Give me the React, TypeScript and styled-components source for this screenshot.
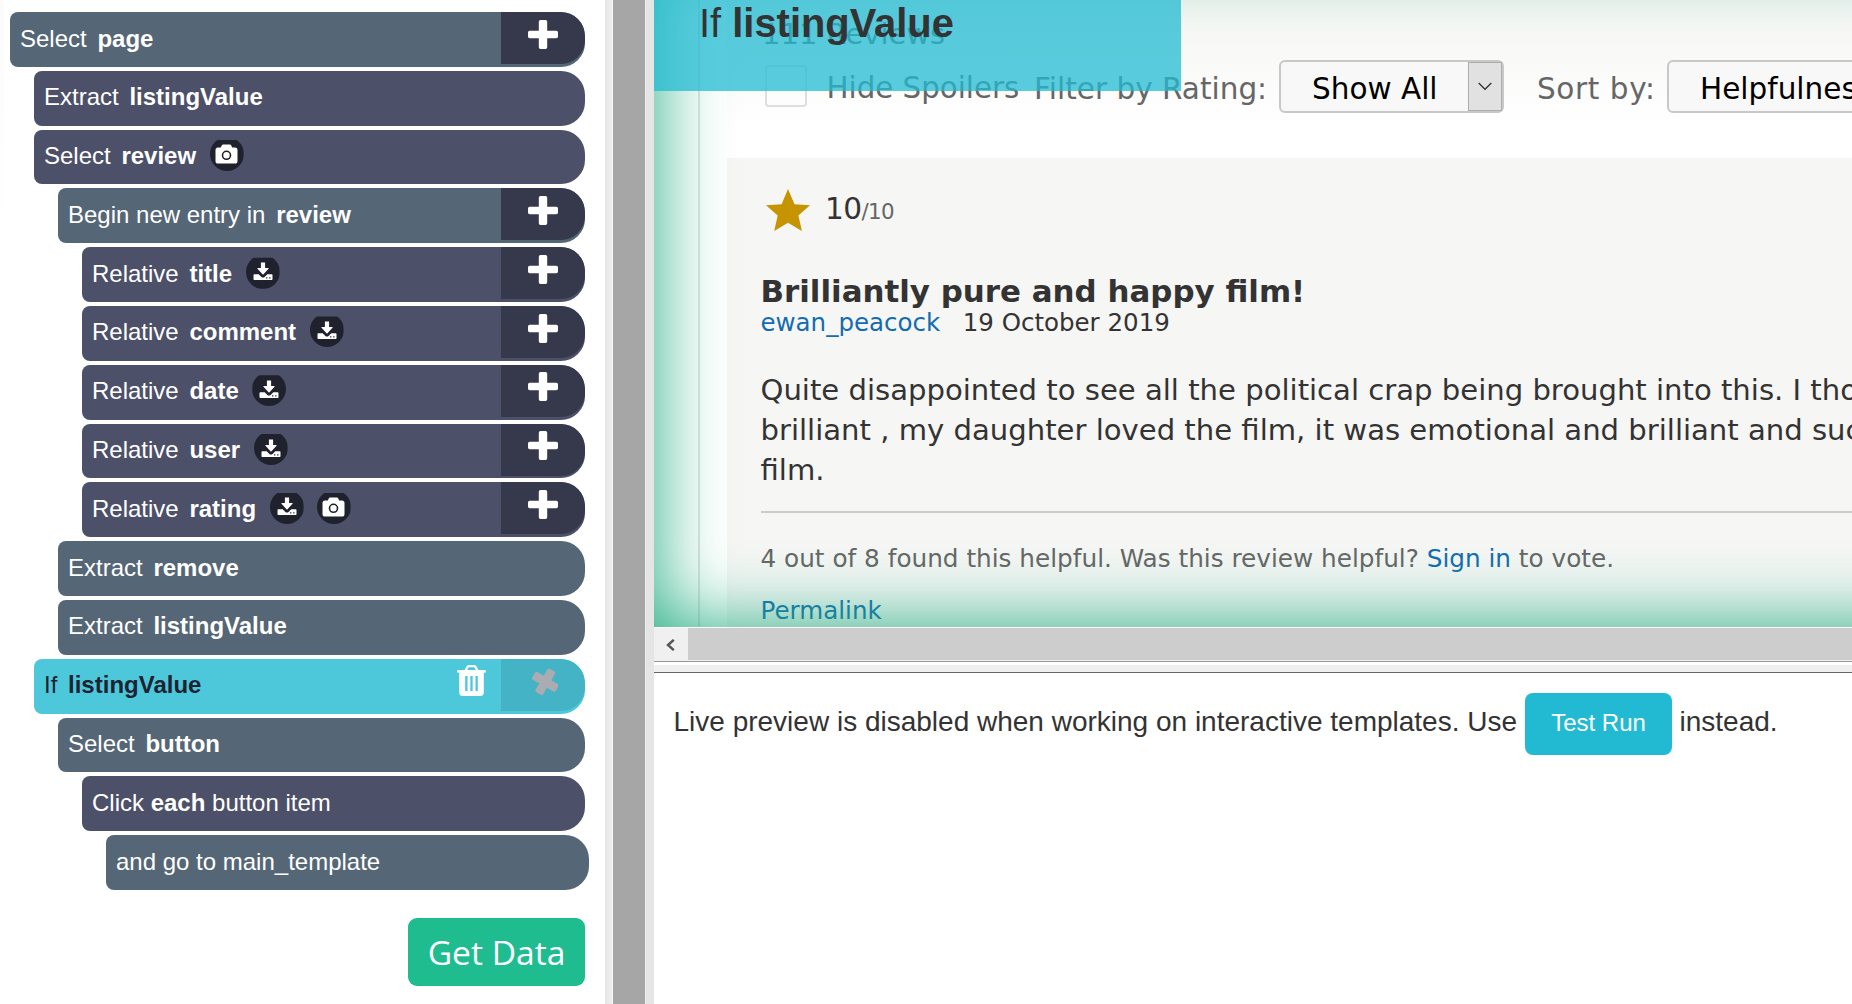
import React from 'react';
import styled, { createGlobalStyle } from 'styled-components';

const Global = createGlobalStyle`
  html, body { margin: 0; padding: 0; overflow: hidden; background: #fff; }
  * { box-sizing: border-box; }
`;

const sans = `"Liberation Sans", Arial, sans-serif`;
const verdana = `Verdana, "DejaVu Sans", sans-serif`;

const Screen = styled.div`
  display: flex;
  width: 1852px;
  height: 1004px;
  overflow: hidden;
  background: #fff;
  font-family: ${sans};
`;

/* Command sidebar */

const Sidebar = styled.aside`
  flex: none;
  display: flex;
  flex-direction: column;
  width: 605px;
  padding-top: 12px;
  background: linear-gradient(#fbfbfb, #fff) 0 0 / 4px 240px no-repeat #fff;
`;

const CommandList = styled.div`
  display: flex;
  flex-direction: column;
  gap: 4px;
`;

type Tone = 'slate' | 'purple' | 'active';
const tones: Record<Tone, string> = { slate: '#556676', purple: '#4c5069', active: '#4dc8db' };

const Command = styled.div<{ $depth: number; $tone: Tone; $wide?: boolean }>`
  display: flex;
  justify-content: space-between;
  height: 54.8px;
  margin-left: ${p => 10 + p.$depth * 24}px;
  margin-right: ${p => (p.$wide ? 16 : 20)}px;
  border-radius: 8px 24px 24px 8px;
  overflow: hidden;
  background: ${p => tones[p.$tone]};
  color: ${p => (p.$tone === 'active' ? '#1f2230' : '#fff')};
`;

const Label = styled.div`
  display: flex;
  align-items: center;
  padding: 0 0 2.8px 10px;
  font-size: 24px;
  line-height: 27px;
  white-space: pre;
`;

const Name = styled.b`
  margin-left: 10.7px;
`;

const Badges = styled.span`
  display: flex;
  gap: 13px;
  margin-left: 13.5px;
`;

const Badge = styled.span`
  display: flex;
  align-items: center;
  justify-content: center;
  width: 34px;
  height: 34px;
  margin-top: -3px;
  border-radius: 50%;
  background: #1f212d;
  clip-path: inset(3px 0 0 0);
`;

const Actions = styled.div`
  display: flex;
`;

const TrashButton = styled.div`
  padding: 6px 15px 0 0;
`;

const SideButton = styled.div<{ $active?: boolean }>`
  display: flex;
  justify-content: center;
  width: 84px;
  height: 52px;
  padding: ${p => (p.$active ? 6 : 7.6)}px 1px 0 0;
  border-radius: 0 24px 24px 0;
  background: ${p => (p.$active ? '#45b3c6' : '#36384b')};
`;

const GetData = styled.button`
  align-self: flex-end;
  width: 177px;
  height: 68px;
  margin: 28px 20px 0 0;
  padding: 1px 0 0;
  border: 0;
  border-radius: 9px;
  background: #1ebc8f;
  color: #fff;
  font: 400 33.6px "Open Sans", "Noto Sans", sans-serif;
`;

const Edge = styled.div`
  flex: none;
  width: 8px;
  background: linear-gradient(90deg, #e4e6e8, #eceef0);
  border-right: 1px solid #f8f8f8;
`;

const Divider = styled.div`
  flex: none;
  width: 32px;
  background: #a6a6a6;
`;

const Gutter = styled.div`
  flex: none;
  width: 9px;
  background: #e5e5e5;
  border-left: 1px solid #eee;
`;

/* Browser pane */

const Main = styled.main`
  flex: 1;
  min-width: 0;
  display: flex;
  flex-direction: column;
`;

const Browser = styled.section`
  position: relative;
  flex: none;
  height: 627px;
  overflow: hidden;
  background: #fff;
  font-family: ${verdana};
`;

const Glow = styled.div`
  position: absolute;
  inset: -47px -100px 0 0;
  box-shadow: inset 0 0 75px rgb(32, 172, 127);
`;

const SelectionTag = styled.div`
  position: absolute;
  top: 0;
  left: 0;
  width: 527px;
  height: 91px;
  padding: 1px 0 0 45px;
  background: rgba(34, 187, 210, 0.75);
  color: #333;
  font: 39.9px/44px ${sans};
  white-space: pre;
`;

const SiteBody = styled.div`
  width: 1300px;
  height: 700px;
  margin-left: 44px;
  padding-left: 27px;
  border-left: 2px solid #e2e2e2;
`;

const ReviewsHeader = styled.header`
  height: 158px;
  padding: 17px 0 0 37px;
  background: linear-gradient(#f6f6f5, #f7f7f6 30px, #fff 128px);
  color: #666;
  font-size: 29.5px;
  line-height: 34px;
  white-space: nowrap;
`;

const ReviewCount = styled.div`
  margin-left: -2px;
  font-size: 29px;
`;

const Filters = styled.div`
  display: flex;
  align-items: center;
  height: 53px;
  margin-top: 9px;
`;

const Checkbox = styled.span`
  width: 42px;
  height: 42px;
  margin: -2px 0 0 0.5px;
  border: 2px solid #dedede;
  border-radius: 4px;
`;

const SpoilerLabel = styled.span`
  width: 207.5px;
  margin-left: 20px;
  padding-top: 2px;
  font-size: 29.3px;
`;

const FilterLabel = styled.span`
  width: 245px;
  padding-top: 4px;
`;

const SortLabel = styled.span`
  width: 163px;
  padding: 4px 0 0 33px;
  letter-spacing: 0.6px;
`;

const Select = styled.span<{ $w: number }>`
  display: flex;
  justify-content: space-between;
  flex: none;
  width: ${p => p.$w}px;
  height: 53px;
  border: 2px solid #c8c8c8;
  border-radius: 6px;
  background: #f8f8f8;
  color: #000;
`;

const SelectText = styled.span`
  padding: 9.6px 0 0 31px;
  font-size: 29.5px;
`;

const SelectArrow = styled.span`
  display: flex;
  align-items: center;
  justify-content: center;
  width: 34px;
  border: 1px solid #adadad;
  background: #e1e1e1;
`;

const Review = styled.article`
  height: 540px;
  padding: 31px 0 0 33.5px;
  background: #f6f6f5;
  color: #333;
  white-space: nowrap;
`;

const Rating = styled.div`
  display: flex;
  height: 85px;
  padding-left: 4px;
`;

const Score = styled.div`
  padding: 3px 0 0 14.5px;
  font-size: 29.6px;
  line-height: 34px;
  letter-spacing: -0.6px;
`;

const OutOf = styled.span`
  color: #666;
  font-size: 21.4px;
`;

const Title = styled.h2`
  margin: 0;
  font-size: 30.9px;
  line-height: 35px;
`;

const Link = styled.span`
  color: #136cb2;
`;

const Meta = styled.div`
  display: flex;
  gap: 22.5px;
  margin-top: -1px;
  font-size: 24.5px;
  line-height: 29px;
`;

const Text = styled.p`
  margin: 33px 0 21px;
  font-size: 29.1px;
  line-height: 40px;
  white-space: pre;
`;

const Helpful = styled.div`
  padding-top: 31px;
  border-top: 2px solid #ccc;
  color: #666;
  font-size: 24.73px;
  line-height: 29px;
`;

const Permalink = styled.div`
  margin-top: 23px;
  font-size: 24.6px;
  line-height: 29px;
`;

const Scrollbar = styled.div`
  flex: none;
  display: flex;
  height: 34px;
  border-top: 1px solid #fff;
  border-bottom: 1px solid #f0f0f0;
`;

const ScrollButton = styled.div`
  display: flex;
  align-items: center;
  justify-content: center;
  width: 34px;
  padding: 1px 2px 0 0;
  background: #f0f0f0;
`;

const ScrollThumb = styled.div`
  flex: 1;
  background: #cdcdcd;
`;

const Splitter = styled.div`
  flex: none;
  height: 12px;
  border-top: 1px solid #999;
  border-bottom: 1px solid #666;
  background: linear-gradient(#fff 3px, #f0f0f0 3px);
`;

const Preview = styled.section`
  display: flex;
  padding: 20px 0 0 19.5px;
  color: #333;
  font-size: 28px;
  line-height: 32px;
  white-space: nowrap;
`;

const PreviewText = styled.span`
  padding-top: 13px;
`;

const TestRun = styled.button`
  width: 147px;
  height: 62px;
  margin: 0 7.5px 0 8px;
  padding: 0 0 3px;
  border: 0;
  border-radius: 8px;
  background: #22bad2;
  color: #fff;
  font: 24px ${sans};
`;

const PlusIcon = () => (
  <svg width="30" height="30" viewBox="0 0 30 30">
    <path fill="#fff" d="M12.500 0h5q1.700 0 1.700 1.700v9.100h9.100q1.700 0 1.700 1.700v4q0 1.700-1.700 1.700h-9.100v9.100q0 1.700-1.700 1.700h-5q-1.700 0-1.700-1.700v-9.100H1.700Q0 18.200 0 16.500v-4q0-1.700 1.700-1.700h9.100V1.700Q10.800 0 12.500 0z" />
  </svg>
);

const CloseIcon = () => (
  <svg width="30" height="32" viewBox="-15 -16 30 32">
    <g fill="#abacb2" transform="translate(2.300 .8) rotate(30)">
      <rect x="-13.500" y="-4.400" width="27" height="8.800" rx="1.700" />
      <rect x="-4.400" y="-13.500" width="8.800" height="27" rx="1.700" />
    </g>
  </svg>
);

const TrashIcon = () => (
  <svg width="29" height="32" viewBox="0 0 29 32">
    <path fill="none" stroke="#fff" strokeWidth="2.300" d="M8.500 6l1.700-3.600q.5-1.200 1.700-1.200h5.200q1.200 0 1.700 1.200L20.500 6" />
    <path fill="#fff" fillRule="evenodd" d="M1 4.900h27q.8 0 .8.800v1.200q0 .8-.8.800h-1.200v19.500q0 3.800-3.300 3.800h-18q-3.300 0-3.300-3.800V7.700H1q-.8 0-.8-.8V5.700q0-.8.8-.8zM8.200 11v15h2.300V11zM13.350 11v15h2.300V11zM18.500 11v15h2.300V11z" />
  </svg>
);

const DownloadIcon = () => (
  <svg width="20" height="19" viewBox="0 0 20 19">
    <path fill="#fff" d="M7.900.5h4.200V6h3.200q.7.100.2.800l-5 5.500q-.5.500-1 0l-5-5.500q-.5-.7.200-.8h3.200z" />
    <path fill="#fff" fillRule="evenodd" d="M1.300 12.200h4.400l2.700 2.700q1.600 1.300 3.200 0l2.700-2.700h4.400q.8 0 .8.800v4.300q0 .8-.8.800H1.300q-.8 0-.8-.8V13q0-.8.800-.8zm11.800 3v1.300h1.300v-1.300zm3.100 0v1.300h1.300v-1.300z" />
  </svg>
);

const CameraIcon = () => (
  <svg width="23" height="20" viewBox="0 0 23 20">
    <path fill="#fff" d="M8.300.5h6.400q1.200 0 1.700 1.200l.8 1.800h2.700q2.600 0 2.600 2.600v10.800q0 2.600-2.600 2.600H3.100q-2.600 0-2.600-2.600V6.100q0-2.600 2.600-2.600h2.700l.8-1.800Q7.100.5 8.300.5z" />
    <circle cx="11.500" cy="11.300" r="4" fill="none" stroke="#1f212d" strokeWidth="1.600" />
  </svg>
);

type Item = {
  verb: string;
  name?: string;
  depth: number;
  tone: Tone;
  badges?: ('download' | 'camera')[];
  plus?: boolean;
};

const items: Item[] = [
  { verb: 'Select', name: 'page', depth: 0, tone: 'slate', plus: true },
  { verb: 'Extract', name: 'listingValue', depth: 1, tone: 'purple' },
  { verb: 'Select', name: 'review', depth: 1, tone: 'purple', badges: ['camera'] },
  { verb: 'Begin new entry in', name: 'review', depth: 2, tone: 'slate', plus: true },
  { verb: 'Relative', name: 'title', depth: 3, tone: 'purple', badges: ['download'], plus: true },
  { verb: 'Relative', name: 'comment', depth: 3, tone: 'purple', badges: ['download'], plus: true },
  { verb: 'Relative', name: 'date', depth: 3, tone: 'purple', badges: ['download'], plus: true },
  { verb: 'Relative', name: 'user', depth: 3, tone: 'purple', badges: ['download'], plus: true },
  { verb: 'Relative', name: 'rating', depth: 3, tone: 'purple', badges: ['download', 'camera'], plus: true },
  { verb: 'Extract', name: 'remove', depth: 2, tone: 'slate' },
  { verb: 'Extract', name: 'listingValue', depth: 2, tone: 'slate' },
  { verb: 'If', name: 'listingValue', depth: 1, tone: 'active' },
  { verb: 'Select', name: 'button', depth: 2, tone: 'slate' },
];

const CommandRow = ({ item }: { item: Item }) => (
  <Command $depth={item.depth} $tone={item.tone}>
    <Label>
      {item.verb}
      <Name>{item.name}</Name>
      {item.badges && (
        <Badges>
          {item.badges.map(b => (
            <Badge key={b}>{b === 'camera' ? <CameraIcon /> : <DownloadIcon />}</Badge>
          ))}
        </Badges>
      )}
    </Label>
    {item.plus && (
      <SideButton>
        <PlusIcon />
      </SideButton>
    )}
    {item.tone === 'active' && (
      <Actions>
        <TrashButton>
          <TrashIcon />
        </TrashButton>
        <SideButton $active>
          <CloseIcon />
        </SideButton>
      </Actions>
    )}
  </Command>
);

export default function App() {
  return (
    <Screen>
      <Global />
      <Sidebar>
        <CommandList>
          {items.map((item, i) => (
            <CommandRow key={i} item={item} />
          ))}
          <Command $depth={3} $tone="purple">
            <Label>Click <b>each</b> button item</Label>
          </Command>
          <Command $depth={4} $tone="slate" $wide>
            <Label>and go to main_template</Label>
          </Command>
        </CommandList>
        <GetData>Get Data</GetData>
      </Sidebar>
      <Edge />
      <Divider />
      <Gutter />
      <Main>
        <Browser>
          <SiteBody>
            <ReviewsHeader>
              <ReviewCount>111 Reviews</ReviewCount>
              <Filters>
                <Checkbox />
                <SpoilerLabel>Hide Spoilers</SpoilerLabel>
                <FilterLabel>Filter by Rating:</FilterLabel>
                <Select $w={225}>
                  <SelectText>Show All</SelectText>
                  <SelectArrow>
                    <svg width="14" height="9" viewBox="0 0 14 9">
                      <path d="M.7 1l6.300 6.300L13.300 1" fill="none" stroke="#333" strokeWidth="1.300" />
                    </svg>
                  </SelectArrow>
                </Select>
                <SortLabel>Sort by:</SortLabel>
                <Select $w={300}>
                  <SelectText>Helpfulness</SelectText>
                </Select>
              </Filters>
            </ReviewsHeader>
            <Review>
              <Rating>
                <svg width="46" height="43" viewBox="0 0 46 43">
                  <path fill="#c59400" d="M23 0l6.500 15.200L45 16.300 33.400 26.500 36.900 42 23 33.700 9.200 42l3.500-15.500L1 16.300l15.600-1.100z" />
                </svg>
                <Score>
                  10<OutOf>/10</OutOf>
                </Score>
              </Rating>
              <Title>Brilliantly pure and happy film!</Title>
              <Meta>
                <Link>ewan_peacock</Link>
                <span>19 October 2019</span>
              </Meta>
              <Text>
                {'Quite disappointed to see all the political crap being brought into this. I thought\nbrilliant , my daughter loved the film, it was emotional and brilliant and such\nfilm.'}
              </Text>
              <Helpful>
                4 out of 8 found this helpful. Was this review helpful? <Link>Sign in</Link> to vote.
              </Helpful>
              <Permalink>
                <Link>Permalink</Link>
              </Permalink>
            </Review>
          </SiteBody>
          <Glow />
          <SelectionTag>
            If <b>listingValue</b>
          </SelectionTag>
        </Browser>
        <Scrollbar>
          <ScrollButton>
            <svg width="10" height="12" viewBox="0 0 10 12">
              <path d="M8.800 .8L3 6l5.800 5.200" fill="none" stroke="#555" strokeWidth="2.400" />
            </svg>
          </ScrollButton>
          <ScrollThumb />
        </Scrollbar>
        <Splitter />
        <Preview>
          <PreviewText>Live preview is disabled when working on interactive templates. Use</PreviewText>
          <TestRun>Test Run</TestRun>
          <PreviewText>instead.</PreviewText>
        </Preview>
      </Main>
    </Screen>
  );
}
